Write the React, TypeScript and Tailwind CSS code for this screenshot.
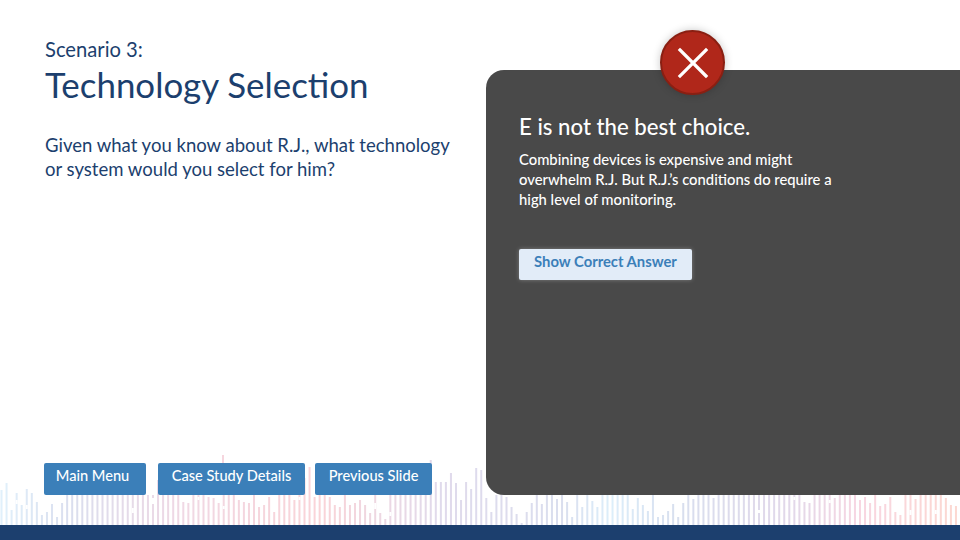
const font = "font-['Lato','Open_Sans',sans-serif]"

// bars default to a top of y=495, these are the ones that differ
const waveOverrides: Record<number, number> = {
  0: 490, 1: 483, 2: 510, 3: 493, 4: 505, 5: 489, 6: 493, 7: 502, 8: 515, 9: 512, 10: 504, 11: 517, 12: 503,
  31: 480, 36: 502, 37: 503, 41: 497, 42: 498, 43: 503, 47: 500, 48: 502, 49: 503, 51: 507, 52: 505, 53: 497,
  54: 512, 58: 500, 60: 478, 61: 467, 62: 497, 65: 497, 66: 505, 67: 507, 69: 505, 70: 503, 71: 500, 72: 505,
  73: 513, 75: 513, 76: 519, 85: 460, 86: 482, 87: 482, 88: 482, 89: 473, 90: 483, 91: 500, 92: 482, 93: 489,
  94: 468, 95: 470, 96: 498, 97: 512, 100: 497, 101: 507, 102: 514, 103: 523, 104: 512, 105: 503, 107: 504,
  110: 499, 112: 502, 113: 517, 115: 507, 117: 501, 118: 507, 125: 509, 126: 498, 127: 505, 128: 511, 130: 517,
  131: 515, 132: 511, 133: 504, 134: 517, 135: 503, 137: 499, 141: 498, 159: 502, 160: 503, 165: 498, 170: 500,
  171: 497, 172: 503, 174: 506, 175: 504, 176: 497, 177: 512, 178: 515, 181: 499, 187: 498, 188: 505, 189: 506,
}

// white gaps inside a bar: [bar index, y, height]
const waveGaps: [number, number, number][] = [
  [3, 500, 4], [5, 505, 4], [26, 508, 5], [30, 498, 6], [39, 497, 3], [44, 506, 3], [59, 497, 3], [74, 503, 6],
  [77, 512, 4], [104, 500, 4], [130, 502, 5], [150, 510, 3], [157, 497, 3], [164, 500, 3], [180, 510, 5], [185, 510, 4],
]

const stops: [number, number[]][] = [
  [0, [224, 240, 251]],
  [70, [218, 222, 238]],
  [180, [240, 216, 228]],
  [320, [250, 212, 216]],
  [440, [224, 218, 236]],
  [560, [218, 222, 238]],
  [610, [220, 238, 250]],
  [680, [216, 222, 238]],
  [790, [226, 216, 234]],
  [860, [248, 214, 226]],
  [960, [252, 216, 208]],
]

function barColor(x: number) {
  for (let i = 1; i < stops.length; i++) {
    const [x1, c1] = stops[i]
    const [x0, c0] = stops[i - 1]
    if (x <= x1) {
      const t = (x - x0) / (x1 - x0)
      const [r, g, b] = c0.map((v, j) => Math.round(v + (c1[j] - v) * t))
      return `rgb(${r},${g},${b})`
    }
  }
  return "rgb(252,216,208)"
}

const barX = (i: number) => 0.5 + i * 5.05

function Waveform() {
  return (
    <svg className="absolute left-0 top-[440px]" width="960" height="85" viewBox="0 440 960 85">
      {Array.from({ length: 190 }, (_, i) => {
        const top = waveOverrides[i] ?? 495
        return <rect key={i} x={barX(i)} y={top} width="2" height={525 - top} fill={barColor(barX(i))} />
      })}
      {waveGaps.map(([i, y, h]) => (
        <rect key={i} x={barX(i)} y={y} width="2" height={h} fill="white" />
      ))}
      <rect x="222" y="455" width="2" height="8" fill="rgb(246,214,222)" />
    </svg>
  )
}

function NavButton({ label, className }: { label: string; className: string }) {
  return (
    <button className={`h-[32px] rounded-[2px] bg-[#3b7fb9] pb-[6px] text-center text-[14.6px] font-medium leading-[24px] text-white ${className}`}>
      {label}
    </button>
  )
}

export default function App() {
  return (
    <div className={`relative flex h-[540px] w-[960px] flex-col overflow-hidden bg-white ${font}`}>
      <Waveform />
      <div className="relative flex flex-1">
        <div className="flex w-[486px] flex-col pb-[30px] pl-[45px] pt-[37px] text-[#1c3f6e]">
          <div className="text-[20.2px] leading-[24px]">Scenario 3:</div>
          <h1 className="mt-[1px] text-[34.9px] leading-[46px]">Technology Selection</h1>
          <p className="mt-[25px] w-[415px] text-[18.55px] leading-[24px]">
            Given what you know about R.J., what technology or system would you select for him?
          </p>
          <div className="mt-auto flex">
            <NavButton label="Main Menu" className="-ml-[1px] w-[102px] pr-[5px]" />
            <NavButton label="Case Study Details" className="ml-[12px] w-[147px]" />
            <NavButton label="Previous Slide" className="ml-[10px] w-[117px]" />
          </div>
        </div>
        <div className="mb-[30px] mt-[70px] flex-1 rounded-l-[18px] bg-[#494949] pl-[33px] pt-[43px] text-white">
          <h2 className="text-[22.2px] font-medium leading-[28px]">E is not the best choice.</h2>
          <p className="mt-[8px] w-[330px] text-[14.8px] font-medium leading-[20px]">
            Combining devices is expensive and might overwhelm R.J. But R.J.’s conditions do require a high level of monitoring.
          </p>
          <button className="mt-[40px] h-[31px] w-[173px] rounded-[2px] bg-[#e2ecf8] pb-[7px] text-[14.8px] font-bold text-[#3b7fb9] shadow-[0_0_4px_rgba(255,255,255,0.3)]">
            Show Correct Answer
          </button>
        </div>
        <div className="absolute left-[660px] top-[30px] flex h-[65px] w-[65px] items-center justify-center rounded-full border-2 border-[#8a1f12] bg-[#b0271a] shadow-[0_0_8px_rgba(0,0,0,0.22)]">
          <svg width="34" height="34" viewBox="0 0 34 34" fill="none" stroke="white" strokeWidth="3.2" strokeLinecap="square">
            <path d="M4 4 L30 30 M30 4 L4 30" />
          </svg>
        </div>
      </div>
      <div className="relative h-[15px] bg-[#1c3f6e]" />
    </div>
  )
}
